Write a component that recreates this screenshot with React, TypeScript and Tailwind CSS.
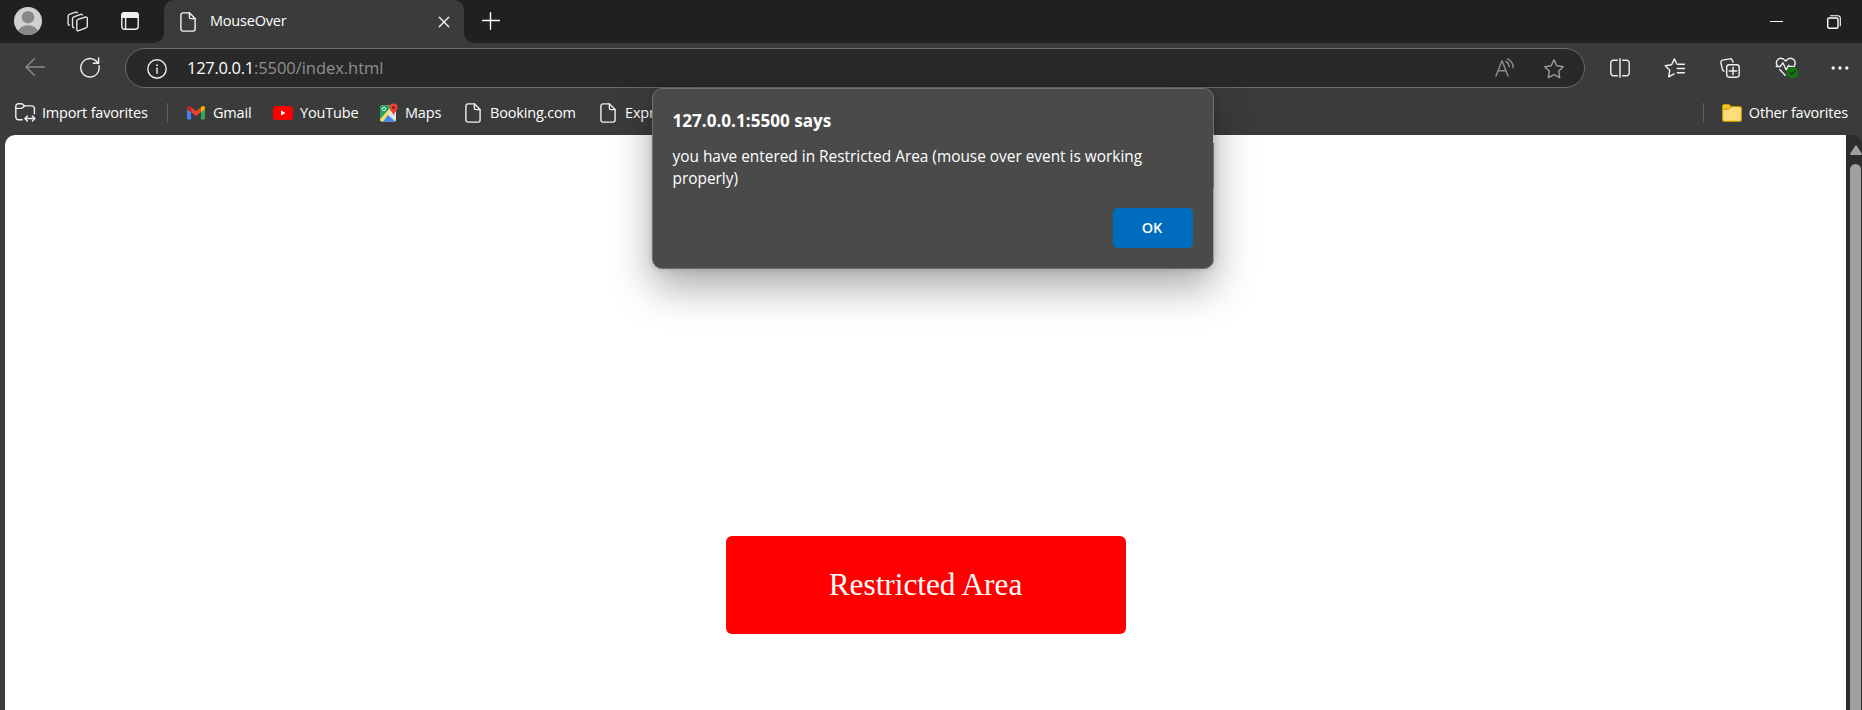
import React from "react";

type IconProps = { className?: string; children: React.ReactNode; w?: number; h?: number };

function Icon({ className = "", children, w = 20, h = 20 }: IconProps) {
  return (
    <svg
      width={w}
      height={h}
      viewBox={`0 0 ${w} ${h}`}
      fill="none"
      stroke="currentColor"
      strokeWidth={1.4}
      strokeLinecap="round"
      strokeLinejoin="round"
      className={`shrink-0 ${className}`}
    >
      {children}
    </svg>
  );
}

function PageIcon({ className = "" }: { className?: string }) {
  return (
    <Icon w={16} h={20} className={className}>
      <path d="M3 .9h6.6l5.5 5.5V17a2.1 2.1 0 0 1-2.1 2.1H3A2.1 2.1 0 0 1 .9 17V3A2.1 2.1 0 0 1 3 .9Z" />
      <path d="M9.4 1v4.2a1.4 1.4 0 0 0 1.4 1.4H15" />
    </Icon>
  );
}

function Avatar() {
  return (
    <svg width="28" height="28" viewBox="0 0 28 28" className="mb-px shrink-0">
      <clipPath id="avatar">
        <circle cx="14" cy="14" r="14" />
      </clipPath>
      <g clipPath="url(#avatar)">
        <rect width="28" height="28" fill="#d2d0ce" />
        <circle cx="14" cy="10.2" r="6.2" fill="#8a8886" />
        <ellipse cx="14" cy="25.6" rx="10" ry="7.4" fill="#8a8886" />
      </g>
    </svg>
  );
}

function WorkspacesIcon() {
  return (
    <Icon w={22} h={22} className="text-[#e4e4e4]">
      <path d="M11 8.3 18.6 6a1.3 1.3 0 0 1 1.7 1.3v7.8c0 .8-.5 1.5-1.3 1.8l-7.3 2.8A1.4 1.4 0 0 1 9.8 18.4V10c0-.8.4-1.4 1.2-1.7Z" />
      <path d="M6.8 16.8a1.5 1.5 0 0 1-1.3-1.5V7.7c0-.9.5-1.6 1.3-1.9l7-2.4a1.3 1.3 0 0 1 1.5.6" />
      <path d="M2.3 14.2a1.5 1.5 0 0 1-1.2-1.5V5.2c0-.8.5-1.5 1.3-1.8l6.4-2.2a1.4 1.4 0 0 1 1.6.6" />
    </Icon>
  );
}

function TabActionsIcon() {
  return (
    <Icon w={18} h={18} className="text-[#f0f0f0]">
      <rect x=".8" y=".8" width="16.4" height="16.4" rx="2.6" />
      <path d="M.8 5.2V3.4A2.6 2.6 0 0 1 3.4.8h11.2a2.6 2.6 0 0 1 2.6 2.6v1.8Z" fill="currentColor" />
      <path d="M4.6 5.5v11.5" />
    </Icon>
  );
}

function ImportIcon() {
  return (
    <Icon w={21} h={19} className="text-[#f0f0f0]">
      <path d="M7.2 16.7H3.4A2.6 2.6 0 0 1 .8 14.1V3.4A2.6 2.6 0 0 1 3.4.8h3c.6 0 1.1.2 1.5.6l1.5 1.5h7.4a2.6 2.6 0 0 1 2.6 2.6v5.2" />
      <path d="M.8 5.4h5.3c.6 0 1.1-.2 1.5-.6l1.8-1.9" />
      <path d="M10.2 15.5h9.4M12.4 13l-2.5 2.5 2.5 2.5M17.4 13l2.5 2.5-2.5 2.5" />
    </Icon>
  );
}

function GmailIcon() {
  return (
    <svg width="18" height="14" viewBox="0 0 18 14" className="shrink-0">
      <path d="M0 3.2 4.1 6.3V13.6H1.4A1.4 1.4 0 0 1 0 12.2Z" fill="#4285f4" />
      <path d="M18 3.2 13.9 6.3V13.6h2.7a1.4 1.4 0 0 0 1.4-1.4Z" fill="#34a853" />
      <path d="M13.9 1.2V6.3L18 3.2V1.9C18 .3 16.1-.6 14.9.4Z" fill="#fbbc04" />
      <path d="M4.1 6.3V1.2L9 4.9l4.9-3.7v5.1L9 10Z" fill="#ea4335" />
      <path d="M0 1.9v1.3l4.1 3.1V1.2L3.1.4C1.9-.6 0 .3 0 1.9Z" fill="#c5221f" />
    </svg>
  );
}

function YouTubeIcon() {
  return (
    <svg width="20" height="14" viewBox="0 0 20 14" className="shrink-0">
      <rect width="20" height="14" rx="3.6" fill="#ff0000" />
      <path d="M8 4.4v5.2l4.6-2.6Z" fill="#fff" />
    </svg>
  );
}

function MapsIcon() {
  return (
    <svg width="18" height="19" viewBox="0 0 18 19" className="shrink-0">
      <rect x="0" y="2.5" width="16" height="16" rx="1.8" fill="#dfe3e6" />
      <path d="M1.8 2.5H12L.3 16.3A1.8 1.8 0 0 1 0 15.5V4.3A1.8 1.8 0 0 1 1.8 2.5Z" fill="#1fa463" />
      <path d="M0 16.2 10.5 5.6l2 2.1L1.8 18.5A1.8 1.8 0 0 1 0 16.7Z" fill="#ffd84d" />
      <path d="M3 18.5 8 12l7 6.3-1 .2Z" fill="#4285f4" />
      <path d="M8 10.9 16 18V8.5l-4-1.6Z" fill="#e4e7ea" />
      <circle cx="3.9" cy="6" r="1.7" fill="none" stroke="#e8f5ee" strokeWidth="1" />
      <path d="M13.5.4a4 4 0 0 1 4 4c0 2.4-1.6 3.3-2.7 5.1-.5.9-.8 2.5-1.3 2.5s-.8-1.6-1.3-2.5C11.1 7.7 9.5 6.8 9.5 4.4a4 4 0 0 1 4-4Z" fill="#ea4335" />
      <circle cx="13.5" cy="4.4" r="1.5" fill="#8c1d18" />
    </svg>
  );
}

function FolderIcon() {
  return (
    <svg width="20" height="18" viewBox="0 0 20 18" className="shrink-0">
      <path d="M.6 2.2A1.6 1.6 0 0 1 2.2.6h4.6L9 2.7h8.6a1.8 1.8 0 0 1 1.8 1.8v11.1a1.8 1.8 0 0 1-1.8 1.8H2.4a1.8 1.8 0 0 1-1.8-1.8Z" fill="#ffdc7c" stroke="#c19c00" strokeWidth="1.2" />
      <path d="M1.2 2.3c0-.6.4-1 1-1h4.3l1.9 1.7-1.7 1.7H1.2Z" fill="#fcc419" />
      <path d="M.8 5.1h5.6c.5 0 .8-.1 1.1-.5L9.2 2.8" fill="none" stroke="#b98c10" strokeWidth="1" />
    </svg>
  );
}

const bookmarkText = "text-[14.5px] tracking-[-0.18px] leading-5 text-white whitespace-nowrap";

function Bookmark({ icon, label, className, iconClass }: { icon: React.ReactNode; label: string; className: string; iconClass: string }) {
  return (
    <div className={`flex shrink-0 items-center ${className}`}>
      <span className={`flex shrink-0 ${iconClass}`}>{icon}</span>
      <span className={bookmarkText}>{label}</span>
    </div>
  );
}

function TitleBar() {
  return (
    <div className="flex h-[43px] shrink-0 bg-[#3b3b3b]">
      <div className="flex w-[164px] shrink-0 items-center rounded-br-[10px] bg-[#202020] pl-[14px]">
        <Avatar />
        <span className="ml-[25px] flex">
          <WorkspacesIcon />
        </span>
        <span className="mb-px ml-8 flex">
          <TabActionsIcon />
        </span>
      </div>
      <div className="w-[300px] shrink-0 bg-[#202020]">
        <div className="flex h-full items-center rounded-t-[10px] bg-[#3b3b3b] pl-4 text-[#f4f4f4]">
          <PageIcon />
          <span className="ml-[14px] pb-[2px] text-[14.5px] leading-5 tracking-[-0.2px] text-white">MouseOver</span>
          <Icon w={12} h={12} className="mr-[14px] ml-auto">
            <path d="m1.3 1.3 9.4 9.4M10.7 1.3l-9.4 9.4" />
          </Icon>
        </div>
      </div>
      <div className="flex flex-1 items-center rounded-bl-[10px] bg-[#202020] pr-[21px] pl-[18px] text-white">
        <Icon w={18} h={18} className="mb-[2px]">
          <path d="M8.5.8v16.4M.5 8.5h17" />
        </Icon>
        <span className="ml-auto h-px w-[13px] bg-white" />
        <Icon w={14} h={14} className="ml-11">
          <rect x=".7" y="3" width="10.3" height="10.3" rx="1.5" />
          <path d="M3.3.8h7.5a2.5 2.5 0 0 1 2.5 2.5v7.4" strokeWidth="1.1" />
        </Icon>
      </div>
    </div>
  );
}

function Toolbar() {
  return (
    <div className="flex h-[50px] shrink-0 items-center text-[#f0f0f0]">
      <Icon w={20} h={18} className="mb-[2px] ml-[25px] text-[#8a8a8a]">
        <path d="M19.3 9H1M9.3.8 1 9l8.3 8.2" />
      </Icon>
      <Icon w={20} h={21} className="mb-px ml-[35px]">
        <path d="M18.9 8.6A9.2 9.2 0 1 1 15 3.1l3.3 2.8" />
        <path d="M18.6 1v5.3h-5.3" />
      </Icon>
      <div className="ml-[25px] flex h-10 w-[1460px] shrink-0 items-center rounded-full border border-[#6b6b6b] bg-[#292929] pr-5 pl-[21px]">
        <Icon className="mt-px">
          <circle cx="10" cy="10" r="9.2" />
          <path d="M10 9v5.2" />
          <circle cx="10" cy="6.2" r=".5" fill="currentColor" strokeWidth=".9" />
        </Icon>
        <p className="ml-5 text-[16.5px] leading-6 whitespace-nowrap text-[#8f8f8f]">
          <span className="tracking-[-0.3px] text-white">127.0.0.1</span>
          <span className="tracking-[-0.05px]">:5500/index.html</span>
        </p>
        <Icon w={20} h={20} className="ml-auto text-[#8f8f8f]">
          <path d="M.9 17.9 7 2.8l6 15.1M3 12.8h8" />
          <path d="M10.8 3.4a6.5 6.5 0 0 1 3.4 5.2M12.5.9a10 10 0 0 1 5.7 8.8" />
        </Icon>
        <Icon w={20} h={20} className="mt-[2px] ml-[29px] text-[#9a9a9a]">
          <path d="m10 .9 2.8 5.9 6.4.9-4.6 4.5 1.1 6.5-5.7-3.1-5.7 3.1 1.1-6.5L.8 7.7l6.4-.9Z" />
        </Icon>
      </div>
      <div className="ml-[7px] flex flex-1 items-center">
        <span className="flex w-[55px] shrink-0 justify-center">
          <Icon w={20} h={20}>
            <path d="M7.3 2.3H3.4A2.6 2.6 0 0 0 .8 4.9v10.2a2.6 2.6 0 0 0 2.6 2.6h3.9M12.7 2.3h3.9a2.6 2.6 0 0 1 2.6 2.6v10.2a2.6 2.6 0 0 1-2.6 2.6h-3.9M10 .7v18.6" />
          </Icon>
        </span>
        <span className="flex w-[55px] shrink-0 justify-center">
          <Icon w={22} h={20}>
            <path d="M12.4 5.1 10.4.9 7.6 6.8l-6.4.9 4.6 4.5-1.1 6.6 5.4-2.9" />
            <path d="M13.3 6.3h7M13.3 10.5h7.2M13.3 14.8h7.2" />
          </Icon>
        </span>
        <span className="flex w-[55px] shrink-0 justify-center">
          <Icon w={20} h={20}>
            <rect x="6.7" y="6.7" width="12.5" height="12.5" rx="2.6" />
            <path d="M13 9.2v7.6M9.2 13h7.6" />
            <path d="M4 13.2a2.5 2.5 0 0 1-1.5-1.8L.9 5.2a2.5 2.5 0 0 1 1.8-3.1L9.5.9a2.5 2.5 0 0 1 2.9 1.7l.6 1.5" />
          </Icon>
        </span>
        <span className="flex w-[55px] shrink-0 justify-center">
          <Icon w={24} h={22} className="ml-[4px]">
            <path d="M2.1 8.4C.3 5.3 2.2 1.3 5.7 1.3c2.1 0 3.5 1 5 2.7 1.5-1.7 2.9-2.7 5-2.7 3.5 0 5.4 3.7 3.9 7.1" />
            <path d="M1.2 9.5h4.1l2.6-3.7 3.2 7 2.5-4.4 1.5 1.1h4.2M4.7 12.5l5.5 5.7" />
            <circle cx="17.5" cy="15.5" r="5.7" fill="#0f7b0f" stroke="none" />
            <path d="m15 15.7 1.8 1.8 3.4-3.7" stroke="#2c2c2c" />
          </Icon>
        </span>
        <span className="flex w-[50px] shrink-0 justify-center pl-[5px]">
          <svg width="18" height="4" viewBox="0 0 18 4" fill="currentColor">
            <circle cx="2.2" cy="2" r="1.7" />
            <circle cx="9" cy="2" r="1.7" />
            <circle cx="15.8" cy="2" r="1.7" />
          </svg>
        </span>
      </div>
    </div>
  );
}

function BookmarksBar() {
  return (
    <div className="flex h-[42px] shrink-0 items-center pr-[14px] pb-[3px] pl-[15px]">
      <Bookmark icon={<ImportIcon />} label="Import favorites" className="w-[152px]" iconClass="w-[27px]" />
      <span className="mr-[19px] h-5 w-px bg-[#5c5c5c]" />
      <Bookmark icon={<GmailIcon />} label="Gmail" className="w-[86px]" iconClass="w-[26px]" />
      <Bookmark icon={<YouTubeIcon />} label="YouTube" className="w-[107px]" iconClass="w-[27px]" />
      <Bookmark icon={<MapsIcon />} label="Maps" className="w-[85px]" iconClass="w-[25px]" />
      <Bookmark icon={<PageIcon className="text-[#f0f0f0]" />} label="Booking.com" className="w-[135px]" iconClass="w-[25px]" />
      <Bookmark icon={<PageIcon className="text-[#f0f0f0]" />} label="Expr" className="" iconClass="w-[25px]" />
      <span className="mr-[18px] ml-auto h-5 w-px bg-[#5c5c5c]" />
      <Bookmark icon={<FolderIcon />} label="Other favorites" className="" iconClass="w-[27px]" />
    </div>
  );
}

function AlertDialog() {
  return (
    <div
      role="alertdialog"
      className="absolute top-[88px] left-[652px] flex h-[181px] w-[562px] flex-col rounded-[10px] border border-[#707070] bg-[#4a4a4a] pt-[20px] pr-5 pl-[19.5px] text-white shadow-[0_0_6px_rgba(0,0,0,0.16),0_18px_40px_rgba(0,0,0,0.34)]"
    >
      <h1 className="text-[17.1px] leading-6 font-bold whitespace-nowrap">127.0.0.1:5500 says</h1>
      <p className="mt-[13px] w-[490px] text-[15.4px] leading-[22px]">
        you have entered in Restricted Area (mouse over event is working properly)
      </p>
      <button className="mt-[18px] h-10 w-20 self-end rounded-[5px] bg-[#006cbe] pr-[2px] pb-px text-[14.5px] font-semibold text-white">OK</button>
      <span className="absolute top-[46px] -right-px h-[8px] w-px bg-[#c8c8c8]" />
      <span className="absolute top-[99px] -right-px h-[72px] w-px bg-[#a0a0a0]" />
    </div>
  );
}

export default function App() {
  return (
    <div className="relative flex h-[710px] w-[1862px] flex-col overflow-hidden bg-[#3b3b3b] font-['Open_Sans','Noto_Sans',sans-serif]">
      <TitleBar />
      <Toolbar />
      <BookmarksBar />
      <div className="flex flex-1 pl-[5px]">
        <main className="flex flex-1 justify-center rounded-tl-[10px] bg-white pt-[401px] pl-px">
          <div className="flex h-[98px] w-[400px] items-center justify-center rounded-[6px] bg-[#ff0000] pr-px font-['Liberation_Serif',serif] text-[31.25px] text-white">
            Restricted Area
          </div>
        </main>
        <div className="flex w-4 flex-col items-center rounded-tr-[10px] bg-[#2c2c2c] pt-[10px] pl-[3px]">
          <svg width="12" height="10" viewBox="0 0 12 10" fill="#9f9f9f" className="shrink-0">
            <path d="M5.2.8a1 1 0 0 1 1.6 0L11.8 8.6A.9.9 0 0 1 11 10H1A.9.9 0 0 1 .2 8.6Z" />
          </svg>
          <div className="mt-[9px] w-[11px] flex-1 rounded-t-full bg-[#9f9f9f]" />
        </div>
      </div>
      <AlertDialog />
    </div>
  );
}
